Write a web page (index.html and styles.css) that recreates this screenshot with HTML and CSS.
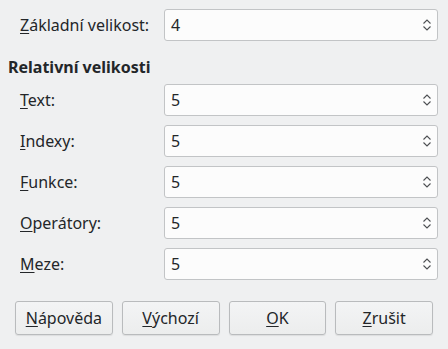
FILE: index.html
```html
<!DOCTYPE html>
<html lang="cs">
<head>
  <meta charset="UTF-8" />
  <title>Velikosti písma</title>
  <link rel="stylesheet" href="styles.css">
</head>
<body>
  <div class="dialog">
    <div class="row">
      <label class="row-label"><u>Z</u>ákladní velikost:</label>
      <div class="spin"><span class="spin-value">4</span>
        <svg class="spin-arrows" width="10" height="14" viewBox="0 0 10 14"><path d="M1.5 5.5 L5 2 L8.5 5.5 M1.5 8.5 L5 12 L8.5 8.5" fill="none" stroke="#4d4f52" stroke-width="1.1"/></svg>
      </div>
    </div>

    <div class="section-title">Relativní velikosti</div>

    <div class="row">
      <label class="row-label"><u>T</u>ext:</label>
      <div class="spin"><span class="spin-value">5</span>
        <svg class="spin-arrows" width="10" height="14" viewBox="0 0 10 14"><path d="M1.5 5.5 L5 2 L8.5 5.5 M1.5 8.5 L5 12 L8.5 8.5" fill="none" stroke="#4d4f52" stroke-width="1.1"/></svg>
      </div>
    </div>
    <div class="row">
      <label class="row-label"><u>I</u>ndexy:</label>
      <div class="spin"><span class="spin-value">5</span>
        <svg class="spin-arrows" width="10" height="14" viewBox="0 0 10 14"><path d="M1.5 5.5 L5 2 L8.5 5.5 M1.5 8.5 L5 12 L8.5 8.5" fill="none" stroke="#4d4f52" stroke-width="1.1"/></svg>
      </div>
    </div>
    <div class="row">
      <label class="row-label"><u>F</u>unkce:</label>
      <div class="spin"><span class="spin-value">5</span>
        <svg class="spin-arrows" width="10" height="14" viewBox="0 0 10 14"><path d="M1.5 5.5 L5 2 L8.5 5.5 M1.5 8.5 L5 12 L8.5 8.5" fill="none" stroke="#4d4f52" stroke-width="1.1"/></svg>
      </div>
    </div>
    <div class="row">
      <label class="row-label"><u>O</u>perátory:</label>
      <div class="spin"><span class="spin-value">5</span>
        <svg class="spin-arrows" width="10" height="14" viewBox="0 0 10 14"><path d="M1.5 5.5 L5 2 L8.5 5.5 M1.5 8.5 L5 12 L8.5 8.5" fill="none" stroke="#4d4f52" stroke-width="1.1"/></svg>
      </div>
    </div>
    <div class="row">
      <label class="row-label"><u>M</u>eze:</label>
      <div class="spin"><span class="spin-value">5</span>
        <svg class="spin-arrows" width="10" height="14" viewBox="0 0 10 14"><path d="M1.5 5.5 L5 2 L8.5 5.5 M1.5 8.5 L5 12 L8.5 8.5" fill="none" stroke="#4d4f52" stroke-width="1.1"/></svg>
      </div>
    </div>

    <div class="buttons">
      <div class="button"><u>N</u>ápověda</div>
      <div class="button"><u>V</u>ýchozí</div>
      <div class="button"><u>O</u>K</div>
      <div class="button"><u>Z</u>rušit</div>
    </div>
  </div>
</body>
</html>
```

FILE: styles.css
```css
* {
  margin: 0;
  padding: 0;
  box-sizing: border-box;
}

html, body {
  width: 100%;
  height: 100%;
  background-color: #eff0f1;
  color: #232629;
  font-family: "Noto Sans", "Open Sans", sans-serif;
  font-size: 16px;
  overflow: hidden;
}

u {
  text-decoration-thickness: 1px;
  text-underline-offset: 2px;
}

.dialog {
  padding: 9px 10px 0 8px;
}

.row {
  display: grid;
  grid-template-columns: 156px 1fr;
  align-items: center;
  height: 32px;
  margin-bottom: 9px;
}

.row-label {
  padding-left: 12px;
}

.spin {
  height: 32px;
  background-color: #fcfcfc;
  border: 1px solid #c2c4c6;
  border-radius: 3px;
  display: flex;
  align-items: center;
  justify-content: space-between;
  padding: 0 5px 0 6px;
}

.spin-arrows {
  display: block;
}

.section-title {
  font-weight: bold;
  line-height: 20px;
  margin-top: 16px;
  margin-bottom: 7px;
}

.buttons {
  display: grid;
  grid-template-columns: repeat(4, 1fr);
  gap: 9px;
  padding: 12px 5px 0 7px;
}

.button {
  height: 34px;
  display: flex;
  align-items: center;
  justify-content: center;
  background: linear-gradient(#f3f4f5, #eceded);
  border: 1px solid #b9bbbd;
  border-radius: 3px;
  box-shadow: 0 1px 1px rgba(0, 0, 0, 0.08);
}
```
